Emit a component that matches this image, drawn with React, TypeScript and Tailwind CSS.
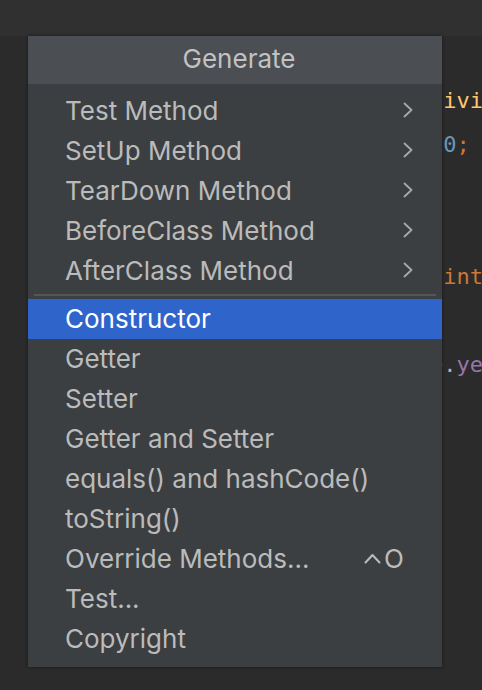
import React from 'react'

type Seg = { t: string; c: string }

// editor lines behind the popup; only the tail past x≈440 shows
const codeLines: Seg[][] = [
  [{ t: '    private static final int d', c: '#a9b7c6' }, { t: 'ivide', c: '#ffc66d' }, { t: '(int a)', c: '#a9b7c6' }],
  [{ t: '        int result = total / 1', c: '#a9b7c6' }, { t: '0', c: '#6897bb' }, { t: ';', c: '#cc7832' }],
  [],
  [],
  [{ t: '    public Calculator(long a, ', c: '#a9b7c6' }, { t: 'int', c: '#cc7832' }, { t: ' b)', c: '#a9b7c6' }],
  [],
  [{ t: '        long total = startDate', c: '#a9b7c6' }, { t: '.', c: '#a9b7c6' }, { t: 'year', c: '#9876aa' }],
]

const subMenus = ['Test Method', 'SetUp Method', 'TearDown Method', 'BeforeClass Method', 'AfterClass Method']

const actions: { label: string; shortcut?: boolean; active?: boolean }[] = [
  { label: 'Constructor', active: true },
  { label: 'Getter' },
  { label: 'Setter' },
  { label: 'Getter and Setter' },
  { label: 'equals() and hashCode()' },
  { label: 'toString()' },
  { label: 'Override Methods...', shortcut: true },
  { label: 'Test...' },
  { label: 'Copyright' },
]

function Chevron() {
  return (
    <svg width="12" height="16" viewBox="0 0 12 16" fill="none">
      <path d="M2.5 1.5 L9.5 8 L2.5 14.5" stroke="#a8a8a8" strokeWidth="1.8" strokeLinecap="round" strokeLinejoin="round" />
    </svg>
  )
}

export default function App() {
  return (
    <div className="relative w-[482px] h-[690px] overflow-hidden bg-[#2b2b2b]">
      <div className="h-[36px] bg-[#303030]" />

      {/* editor */}
      <div
        className="pt-[43px] pl-[46px] text-[22px] leading-[44px] whitespace-pre"
        style={{ fontFamily: '"DejaVu Sans Mono", monospace' }}
      >
        {codeLines.map((line, i) => (
          <div key={i} className="h-[44px]">
            {line.map((s, j) => (
              <span key={j} style={{ color: s.c }}>{s.t}</span>
            ))}
          </div>
        ))}
      </div>

      {/* Generate popup */}
      <div
        className="absolute left-[28px] top-[36px] w-[414px] bg-[#3c3f41] pb-[8px] text-[26px] text-[#bbbbbb] shadow-[0_0_3px_rgba(0,0,0,0.5)]"
        style={{ fontFamily: 'Inter, "Noto Sans", sans-serif' }}
      >
        <div className="h-[48px] bg-[#4b4f54] flex items-center justify-center pl-[8px] pb-[3px] text-[#c2c2c2]">
          Generate
        </div>
        <div className="pt-[6px]">
          {subMenus.map((m) => (
            <div key={m} className="h-[40px] flex items-center justify-between pl-[37px] pr-[28px]">
              <span>{m}</span>
              <Chevron />
            </div>
          ))}
        </div>
        <div className="h-[9px] flex items-center px-[6px]">
          <div className="h-[2px] w-full bg-[#54575a]" />
        </div>
        {actions.map((a) => (
          <div
            key={a.label}
            className={
              a.active
                ? 'h-[40px] flex items-center justify-between pl-[37px] pr-[38px] pb-[2px] bg-[#2f65ca] text-white'
                : 'h-[40px] flex items-center justify-between pl-[37px] pr-[38px] pb-[2px]'
            }
          >
            <span>{a.label}</span>
            {a.shortcut && (
              <span className="flex items-center gap-[3px]">
                <svg width="17" height="11" viewBox="0 0 17 11" fill="none">
                  <path d="M1.5 9.5 L8.5 2 L15.5 9.5" stroke="#bbbbbb" strokeWidth="2" strokeLinecap="round" strokeLinejoin="round" />
                </svg>
                <span>O</span>
              </span>
            )}
          </div>
        ))}
      </div>
    </div>
  )
}
